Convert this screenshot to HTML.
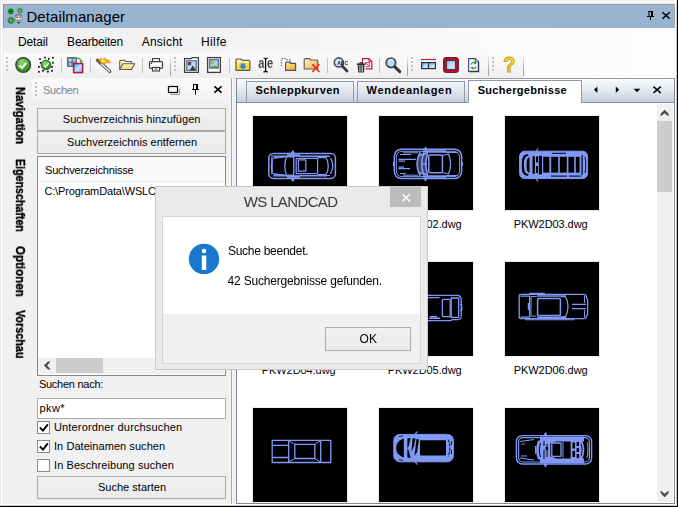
<!DOCTYPE html>
<html><head><meta charset="utf-8"><title>Detailmanager</title>
<style>
*{box-sizing:border-box;margin:0;padding:0}
html,body{width:678px;height:507px;overflow:hidden;background:#f0f0f0;font-family:"Liberation Sans",sans-serif;font-size:12px;color:#000}
.tx{position:absolute;white-space:pre;display:block}
.a{position:absolute}
.btn{position:absolute;border:1px solid #a9a9a9;background:linear-gradient(#f1f1f1,#eaeaea)}
.sep{position:absolute;top:58px;width:1px;height:15px;background:#c5c5c5}
.dot{position:absolute;width:2px;height:2px;background:#c2c2c2}
.cb{position:absolute;left:37px;width:13px;height:13px;border:1px solid #8a8a8a;background:#fff}
.thumb{position:absolute;background:#000;outline:1px solid #ececec}
svg{position:absolute;overflow:visible}
</style></head><body>

<div class="a" style="left:0;top:0;width:678px;height:507px;background:#f0f0f0"></div>
<div class="a" style="left:0;top:0;width:678px;height:1px;background:#ebebeb"></div>
<div class="a" style="left:0;top:0;width:1px;height:507px;background:#ebebeb"></div>
<div class="a" style="left:1px;top:1px;width:676px;height:1px;background:#fff"></div>
<div class="a" style="left:1px;top:1px;width:1px;height:504px;background:#fff"></div>
<div class="a" style="left:3px;top:28px;width:672px;height:50px;background:linear-gradient(90deg,#f0f0f0 0%,#f3f3f3 35%,#fbfbfb 75%,#fdfdfd 100%)"></div>
<div class="a" style="left:3px;top:4px;width:672px;height:24px;background:#99b4d1;border-top:1px solid #9a9a9a;border-left:1px solid #8e8e8e;border-right:1px solid #a4a4a4"></div>
<svg style="left:5px;top:6px" width="22" height="21" viewBox="5 6 22 21">
<g fill="#0f7d0f" stroke="#0f7d0f">
<circle cx="10.8" cy="11.4" r="2"/>
<path d="M10.8 8.2V14.6 M7.6 11.4H14 M8.6 9.2L13 13.6 M13 9.2L8.6 13.6" stroke-width="1.3" fill="none"/>
</g>
<circle cx="19.9" cy="10.7" r="1.7" fill="none" stroke="#2d8f2d" stroke-width="1.3"/>
<circle cx="19.9" cy="10.7" r="2.6" fill="none" stroke="#2d8f2d" stroke-width="1" stroke-dasharray="1.05 1" opacity="0.9"/>
<circle cx="11" cy="20.4" r="2" fill="none" stroke="#1a851a" stroke-width="1.5"/>
<circle cx="11" cy="20.4" r="3.1" fill="none" stroke="#1a851a" stroke-width="1.1" stroke-dasharray="1.25 1.2"/>
<path d="M14.8 23.6L17 20.8H20.4L22.8 23.6Z" fill="#8e949c"/>
<path d="M17.4 23.6L18.6 21.4L19.8 23.6Z" fill="#2e3238"/>
<path d="M16 23.5H17 M20.4 23.5H21.6" stroke="#a8dff0" stroke-width="0.9"/>
<circle cx="18.6" cy="17.9" r="3.7" fill="#dcdcde" stroke="#83858b" stroke-width="0.9"/>
<path d="M15.4 16.2C16.6 14.2 20.6 14.2 21.8 16.2" fill="none" stroke="#686b73" stroke-width="1.3"/>
<circle cx="17.2" cy="17.3" r="0.75" fill="#222"/><circle cx="20" cy="17.3" r="0.75" fill="#222"/>
<path d="M16.6 19.6C17.6 20.6 19.6 20.6 20.6 19.6" fill="none" stroke="#555" stroke-width="0.8"/>
<ellipse cx="18.6" cy="18.4" rx="0.7" ry="1" fill="#f4dccb"/>
</svg>
<span class="tx" style="left:26.40px;top:7.30px;font-size:15px;line-height:19px;letter-spacing:0.096px;color:#000;">Detailmanager</span>
<svg style="left:644px;top:8px" width="30" height="16" viewBox="644 8 30 16">
<path d="M648 11.5H653 M649 11.5V16 M652.5 11V16 M651.5 11V16 M647 16.5H654 M650.5 17V20" fill="none" stroke="#000" stroke-width="1"/>
<path d="M662.4 12.2L669.8 18.8 M669.8 12.2L662.4 18.8" fill="none" stroke="#000" stroke-width="1.5"/>
</svg>
<div class="a" style="left:675px;top:2px;width:1px;height:503px;background:#fff"></div>
<div class="a" style="left:676px;top:2px;width:1px;height:504px;background:#c6c6c6"></div>
<div class="a" style="left:677px;top:0;width:1px;height:507px;background:#000"></div>
<div class="a" style="left:1px;top:504px;width:676px;height:1px;background:#fff"></div>
<div class="a" style="left:1px;top:505px;width:676px;height:1px;background:#c6c6c6"></div>
<div class="a" style="left:0;top:506px;width:678px;height:1px;background:#000"></div>
<span class="tx" style="left:18.00px;top:33.84px;font-size:12px;line-height:16px;letter-spacing:-0.156px;color:#000;">Detail</span>
<span class="tx" style="left:67.10px;top:33.84px;font-size:12px;line-height:16px;letter-spacing:-0.216px;color:#000;">Bearbeiten</span>
<span class="tx" style="left:141.70px;top:33.84px;font-size:12px;line-height:16px;letter-spacing:0.225px;color:#000;">Ansicht</span>
<span class="tx" style="left:201.10px;top:33.84px;font-size:12px;line-height:16px;letter-spacing:0.349px;color:#000;">Hilfe</span>
<div class="a" style="left:3px;top:53px;width:168px;height:25px;background:linear-gradient(#fafafa,#f6f6f6 45%,#eeeeee);border-radius:4px 4px 0 0"></div>
<div class="a" style="left:170px;top:56px;width:1px;height:20px;background:linear-gradient(rgba(166,166,166,0),#a8a8a8 60%,#a4a4a4)"></div>
<div class="dot" style="left:6px;top:57px"></div>
<div class="dot" style="left:6px;top:61px"></div>
<div class="dot" style="left:6px;top:65px"></div>
<div class="dot" style="left:6px;top:69px"></div>
<div class="a" style="left:171px;top:53px;width:237px;height:25px;background:linear-gradient(#fafafa,#f6f6f6 45%,#eeeeee);border-radius:4px 4px 0 0"></div>
<div class="a" style="left:407px;top:56px;width:1px;height:20px;background:linear-gradient(rgba(166,166,166,0),#a8a8a8 60%,#a4a4a4)"></div>
<div class="dot" style="left:174px;top:57px"></div>
<div class="dot" style="left:174px;top:61px"></div>
<div class="dot" style="left:174px;top:65px"></div>
<div class="dot" style="left:174px;top:69px"></div>
<div class="a" style="left:408px;top:53px;width:81px;height:25px;background:linear-gradient(#fafafa,#f6f6f6 45%,#eeeeee);border-radius:4px 4px 0 0"></div>
<div class="a" style="left:488px;top:56px;width:1px;height:20px;background:linear-gradient(rgba(166,166,166,0),#a8a8a8 60%,#a4a4a4)"></div>
<div class="dot" style="left:411px;top:57px"></div>
<div class="dot" style="left:411px;top:61px"></div>
<div class="dot" style="left:411px;top:65px"></div>
<div class="dot" style="left:411px;top:69px"></div>
<div class="a" style="left:489px;top:53px;width:35px;height:25px;background:linear-gradient(#fafafa,#f6f6f6 45%,#eeeeee);border-radius:4px 4px 0 0"></div>
<div class="a" style="left:523px;top:56px;width:1px;height:20px;background:linear-gradient(rgba(166,166,166,0),#a8a8a8 60%,#a4a4a4)"></div>
<div class="dot" style="left:492px;top:57px"></div>
<div class="dot" style="left:492px;top:61px"></div>
<div class="dot" style="left:492px;top:65px"></div>
<div class="dot" style="left:492px;top:69px"></div>
<div class="sep" style="left:61px"></div>
<div class="sep" style="left:90px"></div>
<div class="sep" style="left:142px"></div>
<div class="sep" style="left:229px"></div>
<div class="sep" style="left:327px"></div>
<div class="sep" style="left:379px"></div>
<svg style="left:0;top:53px;will-change:transform" width="530" height="25" viewBox="0 53 530 25">
<defs>
<radialGradient id="gg" cx="0.4" cy="0.3" r="0.8"><stop offset="0" stop-color="#8ee06a"/><stop offset="0.55" stop-color="#3fa52c"/><stop offset="1" stop-color="#237a18"/></radialGradient>
<linearGradient id="cy" x1="0" y1="0" x2="1" y2="1"><stop offset="0" stop-color="#2fa8ea"/><stop offset="0.5" stop-color="#bfe6fb"/><stop offset="1" stop-color="#5fbdf0"/></linearGradient>
<linearGradient id="bl" x1="0" y1="0" x2="1" y2="1"><stop offset="0" stop-color="#4fa0e4"/><stop offset="0.6" stop-color="#c4e2fa"/><stop offset="1" stop-color="#eef7ff"/></linearGradient>
<linearGradient id="yl" x1="0" y1="0" x2="0" y2="1"><stop offset="0" stop-color="#fffcd8"/><stop offset="1" stop-color="#f4d858"/></linearGradient>
<linearGradient id="tn" x1="0" y1="0" x2="1" y2="1"><stop offset="0" stop-color="#fff2a8"/><stop offset="0.5" stop-color="#f6cc60"/><stop offset="1" stop-color="#e49c30"/></linearGradient>
<linearGradient id="pk" x1="0" y1="0" x2="1" y2="1"><stop offset="0" stop-color="#fdf2b8"/><stop offset="0.5" stop-color="#f8d488"/><stop offset="1" stop-color="#ee9c50"/></linearGradient>
<linearGradient id="yf" x1="0" y1="0" x2="0" y2="1"><stop offset="0" stop-color="#fff4a0"/><stop offset="0.35" stop-color="#ffe84a"/><stop offset="1" stop-color="#fbd42c"/></linearGradient>
<linearGradient id="bl2" x1="0" y1="0" x2="1" y2="1"><stop offset="0" stop-color="#8cbcec"/><stop offset="0.55" stop-color="#c6e0f8"/><stop offset="1" stop-color="#e8f4fe"/></linearGradient>
</defs>
<!-- 1 check -->
<circle cx="23.2" cy="65" r="7.3" fill="url(#gg)" stroke="#444" stroke-width="1.5"/>
<path d="M19.4 65.6L22 68L26.4 62.6" fill="none" stroke="#fff" stroke-width="2"/>
<!-- 2 dotted check -->
<rect x="39.15" y="58.15" width="1.7" height="1.7" fill="#111"/><rect x="44.05" y="56.75" width="1.7" height="1.7" fill="#111"/><rect x="47.95" y="57.95" width="1.7" height="1.7" fill="#111"/><rect x="52.05" y="56.85" width="1.7" height="1.7" fill="#111"/><rect x="39.85" y="61.95" width="1.7" height="1.7" fill="#111"/><rect x="52.05" y="61.95" width="1.7" height="1.7" fill="#111"/><rect x="38.05" y="66.05" width="1.7" height="1.7" fill="#111"/><rect x="51.15" y="66.05" width="1.7" height="1.7" fill="#111"/><rect x="38.05" y="70.95" width="1.7" height="1.7" fill="#111"/><rect x="42.05" y="69.95" width="1.7" height="1.7" fill="#111"/><rect x="47.05" y="70.85" width="1.7" height="1.7" fill="#111"/><rect x="51.15" y="69.95" width="1.7" height="1.7" fill="#111"/>
<circle cx="46" cy="65" r="4.8" fill="url(#gg)" stroke="#3a4a3a" stroke-width="1"/>
<path d="M43.8 65.2L45.6 67L48.6 63.2" fill="none" stroke="#fff" stroke-width="1.3"/>
<!-- 3 grid -->
<rect x="67.2" y="57.2" width="9.6" height="9.6" fill="#3b4654"/>
<rect x="68.4" y="58.4" width="3.3" height="3.3" fill="#b8e0fa"/><rect x="72.5" y="58.4" width="3.3" height="3.3" fill="#9cd0f6"/>
<rect x="68.4" y="62.5" width="3.3" height="3.3" fill="#90c8f2"/><rect x="72.5" y="62.5" width="3.3" height="3.3" fill="#c8e8fc"/>
<path d="M77.2 58.4C80 58 81.2 59.6 81.2 61.4" fill="none" stroke="#3b9a2c" stroke-width="1.2"/>
<path d="M79.2 60.8L81.2 63.4L83 60.8Z" fill="#3b9a2c"/>
<rect x="73.6" y="63.6" width="9" height="9" fill="url(#cy)" stroke="#c4103a" stroke-width="1.5"/>
<!-- 4 wand -->
<path d="M97.6 60.2L109.8 71.4" stroke="#555" stroke-width="3.3" stroke-linecap="round"/>
<path d="M101.6 64L109.6 71.2" stroke="#fbfbfb" stroke-width="1.3" stroke-linecap="round"/>
<path d="M98.2 60.4L100.6 57.4L102.8 59L105.4 57.2L106 59.6L109 59.4L108.8 61L111.6 62.2L109 63.4L106.4 62.8L105 64.8L103 63.2L100.4 64L100.8 62Z" fill="#f79a1c"/>
<path d="M100.6 60.6L102.2 58.8L103.6 60.2L105.2 59.4L105 61.2L107.6 61.6L105.4 62.6L103.4 62.4L102 62.8Z" fill="#ffe648"/>
<!-- 5 folder open -->
<path d="M119.7 69.4V61.2L120.6 60.3H124.6L125.8 61.6H131.6V63.6" fill="#fbea8c" stroke="#5c5c5c" stroke-width="1.1"/>
<path d="M120.6 62.6H131" stroke="#fffbe0" stroke-width="0.9"/>
<path d="M119.7 69.5L123 63.7H134.8L131.4 69.5Z" fill="url(#yl)" stroke="#5c5c5c" stroke-width="1.1" stroke-linejoin="round"/>
<!-- 6 printer -->
<rect x="152.5" y="58.6" width="7" height="3.4" fill="#fff" stroke="#3c3c3c" stroke-width="1.1"/>
<rect x="149.5" y="61.6" width="13" height="6.8" rx="1.3" fill="#fdfdfd" stroke="#3c3c3c" stroke-width="1.2"/>
<rect x="152.5" y="67.4" width="7" height="3.6" fill="#fff" stroke="#3c3c3c" stroke-width="1.1"/>
<rect x="154.4" y="68.2" width="3.2" height="2" fill="#9a9a9a"/>
<circle cx="151.6" cy="63.4" r="0.7" fill="#222"/>
<!-- 7 picture frame with tab -->
<path d="M184.6 72.4V58.6H191.2L192.2 57.6H198.4V72.4Z" fill="#fdfdfd" stroke="#3f3f3f" stroke-width="1.3"/>
<rect x="186.8" y="60.8" width="9.4" height="9.6" fill="#b9dcf6" stroke="#3d5068" stroke-width="1"/>
<rect x="188.3" y="62.3" width="2.6" height="2.6" fill="#c8103a" stroke="#4a2a38" stroke-width="0.6"/>
<path d="M189.8 69.9L192.8 65.6L195.8 69.9Z" fill="#3a3a3a"/>
<!-- 8 polaroid -->
<rect x="207.6" y="57.6" width="12.8" height="14.8" fill="#fdfdfd" stroke="#3f3f3f" stroke-width="1.3"/>
<rect x="209.7" y="59.7" width="8.6" height="8.4" fill="#a9d3f5" stroke="#3d5068" stroke-width="1"/>
<circle cx="212.2" cy="62.4" r="1.3" fill="#f6e63a" stroke="#5a5a30" stroke-width="0.6"/>
<path d="M210.2 67.7C212 65.6 215 64.8 217.8 66.2V67.7Z" fill="#5cb82e"/><path d="M210.2 67.5H217.8" stroke="#7a6a30" stroke-width="0.6"/>
<!-- 9 folder star -->
<path d="M235.9 70.3V59.9L236.8 59H241L242.2 60.3H248.8L249.9 61.2V70.3Z" fill="url(#yf)" stroke="#5a5a5a" stroke-width="1.2" stroke-linejoin="round"/>
<path d="M236.8 61.6H249" stroke="#fffbd8" stroke-width="1.1"/>
<path d="M243 62.4V69.4 M239.5 65.9H246.5 M240.6 63.5L245.4 68.3 M245.4 63.5L240.6 68.3" stroke="#1b6fe4" stroke-width="1.05"/>
<circle cx="243" cy="65.9" r="1.5" fill="#1b6fe4"/><circle cx="243" cy="65.9" r="0.6" fill="#9fd0ff"/>
<text x="258.2" y="68.1" font-family="Liberation Sans, sans-serif" font-weight="bold" font-size="14" fill="#4a4a4a" textLength="6.2" lengthAdjust="spacingAndGlyphs">a</text>
<text x="267" y="68.1" font-family="Liberation Sans, sans-serif" font-weight="bold" font-size="14" fill="#4a4a4a" textLength="6.2" lengthAdjust="spacingAndGlyphs">e</text>
<!-- 11 dotted folder -->
<path d="M281.6 66V58.4H285L286 59.6H290.4V62" fill="none" stroke="#666" stroke-width="1.1" stroke-dasharray="1.3 1.3"/>
<path d="M285.6 70.4V63L286.4 62.2H289.4L290.4 63.4H295.6V70.4Z" fill="url(#tn)" stroke="#555" stroke-width="1.2" stroke-linejoin="round"/>
<!-- 12 folder delete -->
<path d="M304.2 69V59.4L305 58.6H309.4L310.6 60H317L317.8 60.8V69Z" fill="url(#pk)" stroke="#606060" stroke-width="1.2" stroke-linejoin="round"/>
<path d="M312.4 64.2L319.4 72 M319.4 64.2L312.4 72" stroke="#ee2c1c" stroke-width="1.7"/>
<!-- 13 magnifier ABC -->
<circle cx="338.8" cy="62.4" r="4.5" fill="#d4e6f8" stroke="#4a4f58" stroke-width="1.6"/>
<path d="M342.4 66.2L347 71" stroke="#3a3a3a" stroke-width="2.8" stroke-linecap="round"/>
<text x="337.2" y="65.2" font-family="Liberation Sans, sans-serif" font-weight="bold" font-size="5.9" fill="#1c1c1c" textLength="11" lengthAdjust="spacingAndGlyphs">ABC</text>
<!-- 14 trash/doc -->
<path d="M362.5 68.8V58.6H369L371.8 61.4V68.8Z" fill="#fff" stroke="#d01440" stroke-width="1.25"/>
<path d="M368.8 58.8V61.6H371.6" fill="none" stroke="#d01440" stroke-width="0.9"/>
<path d="M365.6 62.6H369.4V66.6H365.6Z M366.6 63.6L368.6 65.6" fill="none" stroke="#d01440" stroke-width="0.9"/>
<path d="M356.2 64H365.8V66L365 73.2H357.2L356.2 66Z" fill="#fcfcfc"/>
<rect x="356.8" y="63.4" width="8.6" height="1.7" fill="#2c2c2c"/><rect x="359.4" y="62.2" width="3.4" height="1.4" fill="#2c2c2c"/>
<path d="M357.6 65.6H364.6L364 72.6H358.2Z" fill="#303030"/>
<path d="M359.7 66.4V71.8 M361.1 66.4V71.8 M362.5 66.4V71.8" stroke="#f0f0f0" stroke-width="0.65"/>
<!-- 15 magnifier -->
<circle cx="390.9" cy="62.8" r="4.7" fill="#bcdaf6" stroke="#474c55" stroke-width="1.8"/>
<path d="M388.4 61C389.4 59.6 391.4 59.2 393 60" fill="none" stroke="#eef7ff" stroke-width="1.1"/>
<path d="M394.8 66.8L399.8 71.6" stroke="#3a3a3a" stroke-width="3.1" stroke-linecap="round"/>
<!-- 16 split -->
<path d="M421 59.5H436" stroke="#d0143c" stroke-width="1.1"/>
<rect x="421.6" y="62.6" width="6.8" height="6" fill="url(#bl)"/>
<rect x="428.4" y="62.6" width="7" height="6" fill="url(#bl)"/>
<rect x="421.6" y="62.6" width="13.8" height="6" fill="none" stroke="#2a303c" stroke-width="1.2"/>
<path d="M428.4 62.6V68.6" stroke="#2a303c" stroke-width="1.2"/>
<!-- 17 red frame -->
<rect x="443.6" y="57.6" width="14.8" height="14.8" rx="2.2" fill="#c2082e" stroke="#5a1422" stroke-width="1"/>
<rect x="446.6" y="60.6" width="8.8" height="8.8" fill="url(#bl2)" stroke="#2e3440" stroke-width="1"/>
<!-- 18 doc refresh -->
<path d="M468.6 71.4V58.6H475.4L478.4 61.6V71.4Z" fill="#f6f8fd" stroke="#3e4676" stroke-width="1.1"/>
<path d="M478.6 62V71.6H469" fill="none" stroke="#2e3460" stroke-width="1.2"/>
<path d="M475.2 58.8V61.8H478.2" fill="#dfe6f5" stroke="#3e4676" stroke-width="0.9"/>
<path d="M471 64.6C471.4 62.6 474 61.8 475.6 63.2" fill="none" stroke="#3f9a2c" stroke-width="1.2"/>
<path d="M474.6 61.6L476.8 63.8L474 64.6Z" fill="#3f9a2c"/>
<path d="M476.2 66.4C475.8 68.4 473.2 69.2 471.6 67.8" fill="none" stroke="#3f9a2c" stroke-width="1.2"/>
<path d="M472.6 69.4L470.4 67.2L473.2 66.4Z" fill="#3f9a2c"/>
</svg>
<svg style="left:262px;top:57px" width="8" height="16" viewBox="262 57 8 16"><path d="M265.6 58.6V71.4 M263.4 58C264.6 58 265.6 58.4 265.6 59.4C265.6 58.4 266.6 58 267.8 58 M263.4 72C264.6 72 265.6 71.6 265.6 70.6C265.6 71.6 266.6 72 267.8 72" fill="none" stroke="#000" stroke-width="1.2"/></svg>
<span class="tx" style="left:503.4px;top:52.6px;font-size:21.5px;line-height:24px;font-weight:bold;color:#ffd42a;-webkit-text-stroke:0.9px #c39c1c;transform:scaleX(0.95);transform-origin:0 0">?</span>
<span class="tx" style="left:28.30px;top:87.00px;font-size:12.4px;line-height:16px;font-weight:bold;-webkit-text-stroke:0.35px #000;will-change:transform;transform-origin:0 0;transform:rotate(90deg) scaleX(0.9023);">Navigation</span>
<span class="tx" style="left:28.30px;top:159.00px;font-size:12.4px;line-height:16px;font-weight:bold;-webkit-text-stroke:0.35px #000;will-change:transform;transform-origin:0 0;transform:rotate(90deg) scaleX(0.8613);">Eigenschaften</span>
<span class="tx" style="left:28.30px;top:246.20px;font-size:12.4px;line-height:16px;font-weight:bold;-webkit-text-stroke:0.35px #000;will-change:transform;transform-origin:0 0;transform:rotate(90deg) scaleX(0.9335);">Optionen</span>
<span class="tx" style="left:28.30px;top:310.40px;font-size:12.4px;line-height:16px;font-weight:bold;-webkit-text-stroke:0.35px #000;will-change:transform;transform-origin:0 0;transform:rotate(90deg) scaleX(0.8742);">Vorschau</span>
<div class="a" style="left:32px;top:78px;width:199px;height:25px;background:linear-gradient(#fafafa,#f6f6f6 50%,#f0f0f0);border-radius:4px 0 0 0"></div>
<div class="dot" style="left:35px;top:82px;width:2px;height:2px"></div>
<div class="dot" style="left:35px;top:86px;width:2px;height:2px"></div>
<div class="dot" style="left:35px;top:90px;width:2px;height:2px"></div>
<div class="dot" style="left:35px;top:94px;width:2px;height:2px"></div>
<span class="tx" style="left:43.00px;top:82.69px;font-size:11px;line-height:15px;letter-spacing:-0.321px;color:#7a8298;">Suchen</span>
<div class="a" style="left:231px;top:78px;width:1px;height:426px;background:#a6a6a6"></div>
<div class="a" style="left:230px;top:78px;width:1px;height:426px;background:#f6f6f6"></div>
<div class="a" style="left:232px;top:78px;width:1px;height:426px;background:#f8f8f8"></div>
<svg style="left:166px;top:82px" width="60" height="16" viewBox="166 82 60 16">
<path d="M170.5 94.5H179.5V88.5" fill="none" stroke="#9a9a9a" stroke-width="1"/>
<rect x="168.5" y="86.5" width="9" height="6" fill="#f6f6f6" stroke="#000" stroke-width="1.2"/>
<path d="M193 84.5H198 M193.5 84.5V89 M197.5 84V89 M196.5 84V89 M192 89.5H199 M195.5 90V94.6" fill="none" stroke="#000" stroke-width="1"/>
<path d="M214.4 86.4L221.6 92.6 M221.6 86.4L214.4 92.6" fill="none" stroke="#000" stroke-width="1.6"/>
</svg>
<div class="btn" style="left:37px;top:108px;width:189px;height:23px"></div>
<span class="tx" style="left:62.80px;top:111.69px;font-size:11px;line-height:15px;letter-spacing:0.025px;color:#000;">Suchverzeichnis hinzufügen</span>
<div class="btn" style="left:37px;top:131px;width:189px;height:23px"></div>
<span class="tx" style="left:67.10px;top:134.69px;font-size:11px;line-height:15px;letter-spacing:0.016px;color:#000;">Suchverzeichnis entfernen</span>
<div class="a" style="left:37px;top:156px;width:189px;height:220px;background:#fff;border:1px solid #828790"></div>
<div class="a" style="left:38px;top:157px;width:187px;height:24px;background:#fafafa"></div>
<span class="tx" style="left:45.00px;top:162.69px;font-size:11px;line-height:15px;letter-spacing:-0.194px;color:#000;">Suchverzeichnisse</span>
<div class="a" style="left:39px;top:181px;width:185px;height:1px;background:#e1e9f5"></div>
<span class="tx" style="left:44.40px;top:183.69px;font-size:11px;line-height:15px;letter-spacing:-0.150px;color:#000;">C:\ProgramData\WSLC</span>
<div class="a" style="left:38px;top:358px;width:186px;height:16px;background:#f0f0f0"></div>
<div class="a" style="left:56px;top:358px;width:47px;height:15px;background:#cdcdcd"></div>
<svg style="left:43px;top:360px" width="10" height="12" viewBox="43 360 10 12"><path d="M48 361.4L43.9 365.4L48 369.4H50.6L47.2 365.4L50.6 361.4Z" fill="#4c4c4c"/></svg>
<span class="tx" style="left:38.90px;top:376.69px;font-size:11px;line-height:15px;letter-spacing:-0.261px;color:#000;">Suchen nach:</span>
<div class="a" style="left:37px;top:398px;width:189px;height:21px;background:#fff;border:1px solid #abadb3"></div>
<span class="tx" style="left:39.40px;top:400.69px;font-size:11px;line-height:15px;letter-spacing:0.453px;color:#000;">pkw*</span>
<div class="cb" style="top:421px"></div>
<svg style="left:37px;top:421px" width="13" height="13" viewBox="0 0 13 13"><path d="M2.9 6.5L6 9.6L10.8 3.4" fill="none" stroke="#000" stroke-width="1.9"/></svg>
<span class="tx" style="left:54.00px;top:419.69px;font-size:11px;line-height:15px;letter-spacing:0.153px;color:#000;">Unterordner durchsuchen</span>
<div class="cb" style="top:440px"></div>
<svg style="left:37px;top:440px" width="13" height="13" viewBox="0 0 13 13"><path d="M2.9 6.5L6 9.6L10.8 3.4" fill="none" stroke="#000" stroke-width="1.9"/></svg>
<span class="tx" style="left:54.00px;top:438.69px;font-size:11px;line-height:15px;letter-spacing:0.055px;color:#000;">In Dateinamen suchen</span>
<div class="cb" style="top:459px"></div>
<span class="tx" style="left:54.00px;top:457.69px;font-size:11px;line-height:15px;letter-spacing:0.085px;color:#000;">In Beschreibung suchen</span>
<div class="btn" style="left:37px;top:476px;width:189px;height:23px"></div>
<span class="tx" style="left:98.00px;top:479.69px;font-size:11px;line-height:15px;letter-spacing:0.011px;color:#000;">Suche starten</span>
<div class="a" style="left:236px;top:78px;width:439px;height:426px;background:#fff;border:1px solid #7d8797;border-top-color:#9a9a9a"></div>
<div class="a" style="left:237px;top:79px;width:437px;height:24px;background:linear-gradient(#fbfcfd,#dfe6ee 55%,#c4d0de);border-bottom:1px solid #8a909b"></div>
<div class="a" style="left:246px;top:81px;width:108px;height:21px;border:1px solid #929aa6;border-bottom:none;background:linear-gradient(#f4f6f9,#dbe3ec 55%,#c6d1de)"></div>
<span class="tx" style="left:255.50px;top:82.69px;font-size:11px;line-height:15px;letter-spacing:0.429px;color:#000;font-weight:bold;">Schleppkurven</span>
<div class="a" style="left:357px;top:81px;width:108px;height:21px;border:1px solid #929aa6;border-bottom:none;background:linear-gradient(#f4f6f9,#dbe3ec 55%,#c6d1de)"></div>
<span class="tx" style="left:366.60px;top:82.69px;font-size:11px;line-height:15px;letter-spacing:0.689px;color:#000;font-weight:bold;">Wendeanlagen</span>
<div class="a" style="left:468px;top:80px;width:114px;height:23px;border:1px solid #929aa6;border-bottom:none;background:#fff"></div>
<span class="tx" style="left:477.70px;top:82.69px;font-size:11px;line-height:15px;letter-spacing:0.310px;color:#000;font-weight:bold;">Suchergebnisse</span>
<svg style="left:590px;top:82px" width="76" height="16" viewBox="590 82 76 16">
<path d="M594 89.8L597.4 86.5V93.1Z" fill="#000"/>
<path d="M619.2 89.8L615.8 86.5V93.1Z" fill="#000"/>
<path d="M633.6 88.7H640.4L637 92.2Z" fill="#000"/>
<path d="M653.4 86.6L660.8 93 M660.8 86.6L653.4 93" fill="none" stroke="#000" stroke-width="1.65"/>
</svg>
<div class="a" style="left:657px;top:104px;width:16px;height:398px;background:#f0f0f0"></div>
<div class="a" style="left:657px;top:121px;width:15px;height:71px;background:#cdcdcd"></div>
<svg style="left:657px;top:103px" width="16" height="399" viewBox="657 103 16 399"><path d="M660.6 113.8L664.6 109.7L668.6 113.8V116.6L664.6 113.2L660.6 116.6Z" fill="#4c4c4c"/><path d="M660.6 493.2L664.6 497.3L668.6 493.2V490.4L664.6 493.8L660.6 490.4Z" fill="#4c4c4c"/></svg>
<div class="thumb" style="left:253px;top:116px;height:94px;width:94px"></div>
<svg style="left:253px;top:116px" width="95" height="95" viewBox="253 116 95 95" fill="none" stroke="#8199f5" stroke-width="1.25" stroke-linejoin="round"><rect x="268.8" y="153.4" width="66.59999999999997" height="25.0" rx="4.5" stroke-width="1.5"/><path d="M271 156.2H329 M273 175.8H327" /><path d="M272 157.5V174.5" stroke-width="1.6"/><path d="M272.5 160C271 164 271 168 272.5 172 M273 158.5L284 157 M273 173.5L284 175" /><path d="M274 157.3L286 156.5 M274 174.7L286 175.5" stroke-width="1.6"/><path d="M286.5 156.8C284.3 162 284.3 170 286.5 175.2 M293.8 156.8V175.2 M286.5 156.8H293.8 M286.5 175.2H293.8" stroke-width="1.3"/><path d="M287 155.3H300 M287 176.7H300" stroke-width="2"/><rect x="296.2" y="158.4" width="21.400000000000034" height="15.199999999999989" rx="0.5" /><rect x="298.4" y="159.8" width="7.400000000000034" height="11.399999999999977" rx="0.3" /><path d="M317.6 157.5H326C329 162 329 170 326 174.5H317.6" /><path d="M330.5 158C333.3 163 333.3 169 330.5 174" /><path d="M300 156.5H330 M300 175.5H330" stroke-width="1"/><path d="M291 153.5L293 150.8L294 153.5Z M291 178.5L293 181L294 178.5Z" fill="#8199f5"/></svg>
<span class="tx" style="left:261.70px;top:216.69px;font-size:11px;line-height:15px;letter-spacing:-0.059px;color:#000;">PKW2D01.dwg</span>
<div class="thumb" style="left:379px;top:116px;height:94px;width:94px"></div>
<svg style="left:379px;top:116px" width="95" height="95" viewBox="379 116 95 95" fill="none" stroke="#8199f5" stroke-width="1.25" stroke-linejoin="round"><rect x="394.3" y="149.3" width="67.30000000000001" height="29.299999999999983" rx="7" stroke-width="1.5"/><rect x="396.3" y="151.3" width="63.30000000000001" height="25.299999999999983" rx="5.5" stroke-width="1"/><path d="M398.5 159.3H416 M398.5 161H405 M398.5 168.6H410 M398.5 167H404" /><path d="M403 152.8H418 M403 175.2H418 M400 154.5H411 M400 173.5H406" stroke-width="1"/><path d="M420 152C416 160 416 168 420 176 M424 153C421 160 421 168 424 175 M427.5 154C425.5 160 425.5 168 427.5 174" stroke-width="1.6"/><path d="M418 156L428 153 M418 172L428 175 M421 164H427" stroke-width="1.4"/><path d="M420.5 152.5C416.5 160 416.5 168 420.5 175.5L428 174.5C426 168 426 160 428 153.5Z" fill="#8199f5" fill-opacity="0.45" stroke="none"/><rect x="428.8" y="155" width="13.599999999999966" height="17.80000000000001" rx="1.2" stroke-width="1.5"/><path d="M442.4 155.5L448.5 154C451 160 451 168 448.5 174L442.4 172.5" /><path d="M423 151.4H446 M423 176.5H446" stroke-width="2.5"/><path d="M446 152.5H457 M446 175.5H457" stroke-width="1.2"/><path d="M424.4 149.5L425.6 147.2L426.4 149.5Z M424.4 178.5L425.6 180.8L426.4 178.5Z" fill="#8199f5"/><path d="M393.6 162V166 M462.3 162V166" stroke-width="1.3"/></svg>
<span class="tx" style="left:387.70px;top:216.69px;font-size:11px;line-height:15px;letter-spacing:-0.059px;color:#000;">PKW2D02.dwg</span>
<div class="thumb" style="left:505px;top:116px;height:94px;width:94px"></div>
<svg style="left:505px;top:116px" width="95" height="95" viewBox="505 116 95 95" fill="none" stroke="#8199f5" stroke-width="1.25" stroke-linejoin="round"><rect x="519.6" y="151.2" width="68.0" height="27.400000000000006" rx="5" fill="#8199f5" stroke-width="1"/><path d="M528 154.2C522.5 154.5 521.8 158 521.8 165C521.8 172 522.5 175.5 528 175.8L528.6 174.2C525 174 524 171 524 165C524 159 525 156 528.6 155.8Z" fill="#000" stroke="none"/><path d="M529.5 157.5C527.2 157.5 526.6 160 526.6 165C526.6 170 527.2 172.5 529.5 172.5Z" fill="#000" stroke="none"/><rect x="532.5" y="156.2" width="2.4" height="17.6" fill="#000" stroke="none"/><rect x="536" y="156.5" width="2" height="6" fill="#000" stroke="none"/><rect x="536" y="166" width="2" height="7" fill="#000" stroke="none"/><rect x="538.8" y="155.8" width="3.2" height="18.6" fill="#000" stroke="none"/><rect x="543.2" y="156.8" width="6.2" height="15.8" fill="#000" stroke="none"/><rect x="551.2" y="156.8" width="7.0" height="15.8" fill="#000" stroke="none"/><rect x="559.8" y="156.8" width="7.0" height="15.8" fill="#000" stroke="none"/><rect x="568.4" y="156.8" width="5.8" height="15.8" fill="#000" stroke="none"/><rect x="575.8" y="156.8" width="3.8" height="15.8" fill="#000" stroke="none"/><rect x="581.5" y="155" width="1.2" height="20" fill="#000" stroke="none"/><path d="M585 157C586 162 586 168 585 173" stroke="#000" stroke-width="0.9" fill="none"/><rect x="552" y="152.8" width="14" height="1" fill="#000" stroke="none"/><rect x="551" y="175.6" width="16" height="1" fill="#000" stroke="none"/><rect x="569" y="175.6" width="12" height="1" fill="#000" stroke="none"/><path d="M536 151.5L538 148.5 M536 178.5L538 181.5" stroke-width="1.2"/></svg>
<span class="tx" style="left:513.70px;top:216.69px;font-size:11px;line-height:15px;letter-spacing:-0.059px;color:#000;">PKW2D03.dwg</span>
<div class="thumb" style="left:253px;top:262px;height:94px;width:94px"></div>

<span class="tx" style="left:261.70px;top:362.69px;font-size:11px;line-height:15px;letter-spacing:-0.059px;color:#000;">PKW2D04.dwg</span>
<div class="thumb" style="left:379px;top:262px;height:94px;width:94px"></div>
<svg style="left:379px;top:262px" width="95" height="95" viewBox="379 262 95 95" fill="none" stroke="#8199f5" stroke-width="1.25" stroke-linejoin="round"><path d="M420 295.4H457C460.5 295.4 461.2 297 461.2 300V315.5C461.2 318.5 460.5 319.6 457 319.6H452L451 320.6H420" stroke-width="1.3"/><path d="M428 297.6H439.5 M429 318.3H440 M430 316.6H437" stroke-width="1.4"/><rect x="442.4" y="299.4" width="7.800000000000011" height="17.200000000000045" rx="1.2" stroke-width="1.3"/><path d="M451.2 298H458.6V317.4H451.2Z" stroke-width="1.3"/><path d="M460 304.5H461.8V310.5H460" stroke-width="1.1"/></svg>
<span class="tx" style="left:387.70px;top:362.69px;font-size:11px;line-height:15px;letter-spacing:-0.059px;color:#000;">PKW2D05.dwg</span>
<div class="thumb" style="left:505px;top:262px;height:94px;width:94px"></div>
<svg style="left:505px;top:262px" width="95" height="95" viewBox="505 262 95 95" fill="none" stroke="#8199f5" stroke-width="1.25" stroke-linejoin="round"><path d="M520.4 294.4H583C586 294.4 586.6 296 586.6 298L587.6 300V314L586.6 316C586.6 317.5 586 318.6 583 318.6H520.4C519.4 318.6 519.2 318 519.2 317V296C519.2 295 519.4 294.4 520.4 294.4Z" stroke-width="1.3"/><path d="M529.2 293.4H544.8 M525 319.8H574.5" stroke-width="1.1"/><path d="M520.5 296H529.6V317H520.5" /><path d="M528.6 303V310" stroke-width="1.6"/><path d="M531 296.6H536.5 M531 316.2H536.5 M531 296.6V316.2" stroke-width="1"/><rect x="537.6" y="298.4" width="22.799999999999955" height="17.0" rx="1" stroke-width="1.5"/><path d="M537 296H566 M537 317.4H566" stroke-width="1.6"/><path d="M561 296.5H565.5C568.8 302 568.8 311 565.5 316.8H561" /><path d="M572 304.3H585.8 M572 308.5H585.8" /><path d="M584.5 296V303 M584.5 310V317" stroke-width="1"/></svg>
<span class="tx" style="left:513.70px;top:362.69px;font-size:11px;line-height:15px;letter-spacing:-0.059px;color:#000;">PKW2D06.dwg</span>
<div class="thumb" style="left:253px;top:408px;height:94px;width:94px"></div>
<svg style="left:253px;top:408px" width="95" height="95" viewBox="253 408 95 95" fill="none" stroke="#8199f5" stroke-width="1.25" stroke-linejoin="round"><rect x="272.2" y="440.3" width="58.6" height="22.2" stroke-width="1.3"/><path d="M288.7 440.3V462.5 M320.7 440.3V462.5 M272.2 445.3H288.7 M272.2 457.5H288.7" stroke-width="1.3"/><rect x="294.8" y="444.3" width="20" height="14.2" stroke-width="1.3"/><path d="M289 440.8L294.8 444.3 M289 462L294.8 458.5 M320.4 440.8L314.8 444.3 M320.4 462L314.8 458.5" stroke-width="1"/></svg>
<div class="thumb" style="left:379px;top:408px;height:94px;width:94px"></div>
<svg style="left:379px;top:408px" width="95" height="95" viewBox="379 408 95 95" fill="none" stroke="#8199f5" stroke-width="1.25" stroke-linejoin="round"><rect x="393.8" y="434.4" width="59.599999999999966" height="27.400000000000034" rx="6" fill="#8199f5" stroke-width="1"/><path d="M403.8 438.6C397 441 396.2 445 396.2 448C396.2 451 397 455 403.8 457.4Z" fill="#000" stroke="none"/><path d="M399 436.6L403 435.8 M399 459.6L403 460.4" stroke="#000" stroke-width="0.8"/><path d="M407.4 438.5L410.5 438L408.6 446.5L407.4 448Z M407.4 457.5L410.5 458L408.6 450L407.4 448.5Z" fill="#000" stroke="none"/><path d="M412.5 438.5L415.5 438.5L414 446L411.5 452Z M416.5 439L419 439.5L417 452L414.5 456Z" fill="#000" stroke="none"/><rect x="420" y="440.2" width="26" height="15.2" rx="1" fill="#000" stroke="none"/><path d="M448 439.5C450.5 445 450.5 451 448 456.5" stroke="#000" stroke-width="1" stroke-dasharray="3 1.2" fill="none"/><path d="M451.4 441V445 M451.4 450V454" stroke="#000" stroke-width="0.9"/><path d="M415 434.4L417.4 431.4 M415 461.8L417.4 464.6" stroke-width="1.2"/></svg>
<div class="thumb" style="left:505px;top:408px;height:94px;width:94px"></div>
<svg style="left:505px;top:408px" width="95" height="95" viewBox="505 408 95 95" fill="none" stroke="#8199f5" stroke-width="1.25" stroke-linejoin="round"><rect x="516.4" y="435.6" width="75.20000000000005" height="28.399999999999977" rx="6" stroke-width="1.4"/><rect x="518.6" y="437.6" width="70.79999999999995" height="24.399999999999977" rx="4.5" stroke-width="1.2"/><path d="M540 436.5H584V441.5H556L552 443H540Z M540 463.2H584V458.5H556L552 456.8H540Z" fill="#8199f5" stroke="none"/><path d="M538 440.5C535.5 447 535.5 453 538 459.5H550V440.5Z" fill="#8199f5" stroke="none"/><path d="M540.5 443C539 447 539 453 540.5 457 M544 441V446 M544 450V459 M547 444V457" stroke="#000" stroke-width="1" fill="none"/><rect x="545.5" y="447" width="2.6" height="3" fill="#000" stroke="none"/><path d="M520 441.5L534 439.5 M520 458L534 460 M521.5 444H525 M521 456H527" stroke-width="1.1"/><path d="M535.6 446V454" stroke-width="1.2"/><rect x="551.8" y="443" width="9.200000000000045" height="13.399999999999977" rx="0.6" stroke-width="1.3"/><path d="M549.8 441.8V457.6 M563 442V457.5" stroke-width="1"/><path d="M570.6 440.5H582C585 446 585 454 582 459.5H570.6Z" fill="#8199f5" stroke="none"/><rect x="572.4" y="442.5" width="2.6" height="6" fill="#000" stroke="none"/><rect x="572.4" y="451" width="2.6" height="6" fill="#000" stroke="none"/><rect x="576.6" y="442" width="2.4" height="4" fill="#000" stroke="none"/><rect x="576.6" y="448" width="2.4" height="4" fill="#000" stroke="none"/><rect x="576.6" y="454" width="2.4" height="4" fill="#000" stroke="none"/><path d="M581 443.5C582.4 447 582.4 453 581 456.5" stroke="#000" stroke-width="0.9" fill="none"/><path d="M587 442C588.2 447 588.2 453 587 458" stroke-width="1"/><path d="M544 435.6L545.6 432.8L546.6 435.6Z M544 464L545.6 466.6L546.6 464Z" fill="#8199f5"/></svg>
<div class="a" style="left:155px;top:186px;width:273px;height:184px;background:#eaeaea;border:1px solid #c9c9c9"></div>
<div class="a" style="left:162px;top:216px;width:259px;height:148px;background:#f0f0f0;border:1px solid #d4d4d4"></div>
<div class="a" style="left:163px;top:217px;width:257px;height:97px;background:#fff"></div>
<span class="tx" style="left:243.70px;top:192.30px;font-size:15px;line-height:19px;letter-spacing:-0.624px;color:#383838;">WS LANDCAD</span>
<div class="a" style="left:390px;top:187px;width:31px;height:20px;background:#bcbcbc"></div>
<svg style="left:400px;top:192px" width="12" height="12" viewBox="400 192 12 12"><path d="M402.4 194.2L409.8 201.4 M409.8 194.2L402.4 201.4" fill="none" stroke="#fff" stroke-width="1.5"/></svg>
<svg style="left:188px;top:243px" width="32" height="32" viewBox="0 0 32 32"><circle cx="16" cy="15.9" r="15.2" fill="#1a77d0"/><rect x="13.8" y="12.5" width="4.5" height="14.5" fill="#fff"/><circle cx="16" cy="8" r="2.3" fill="#fff"/></svg>
<span class="tx" style="left:227.90px;top:242.84px;font-size:12px;line-height:16px;letter-spacing:-0.259px;color:#000;">Suche beendet.</span>
<span class="tx" style="left:227.60px;top:272.84px;font-size:12px;line-height:16px;letter-spacing:-0.194px;color:#000;">42 Suchergebnisse gefunden.</span>
<div class="btn" style="left:325px;top:327px;width:86px;height:24px;border-color:#acacac"></div>
<span class="tx" style="left:359.60px;top:330.84px;font-size:12px;line-height:16px;letter-spacing:-0.039px;color:#000;">OK</span>
</body></html>
